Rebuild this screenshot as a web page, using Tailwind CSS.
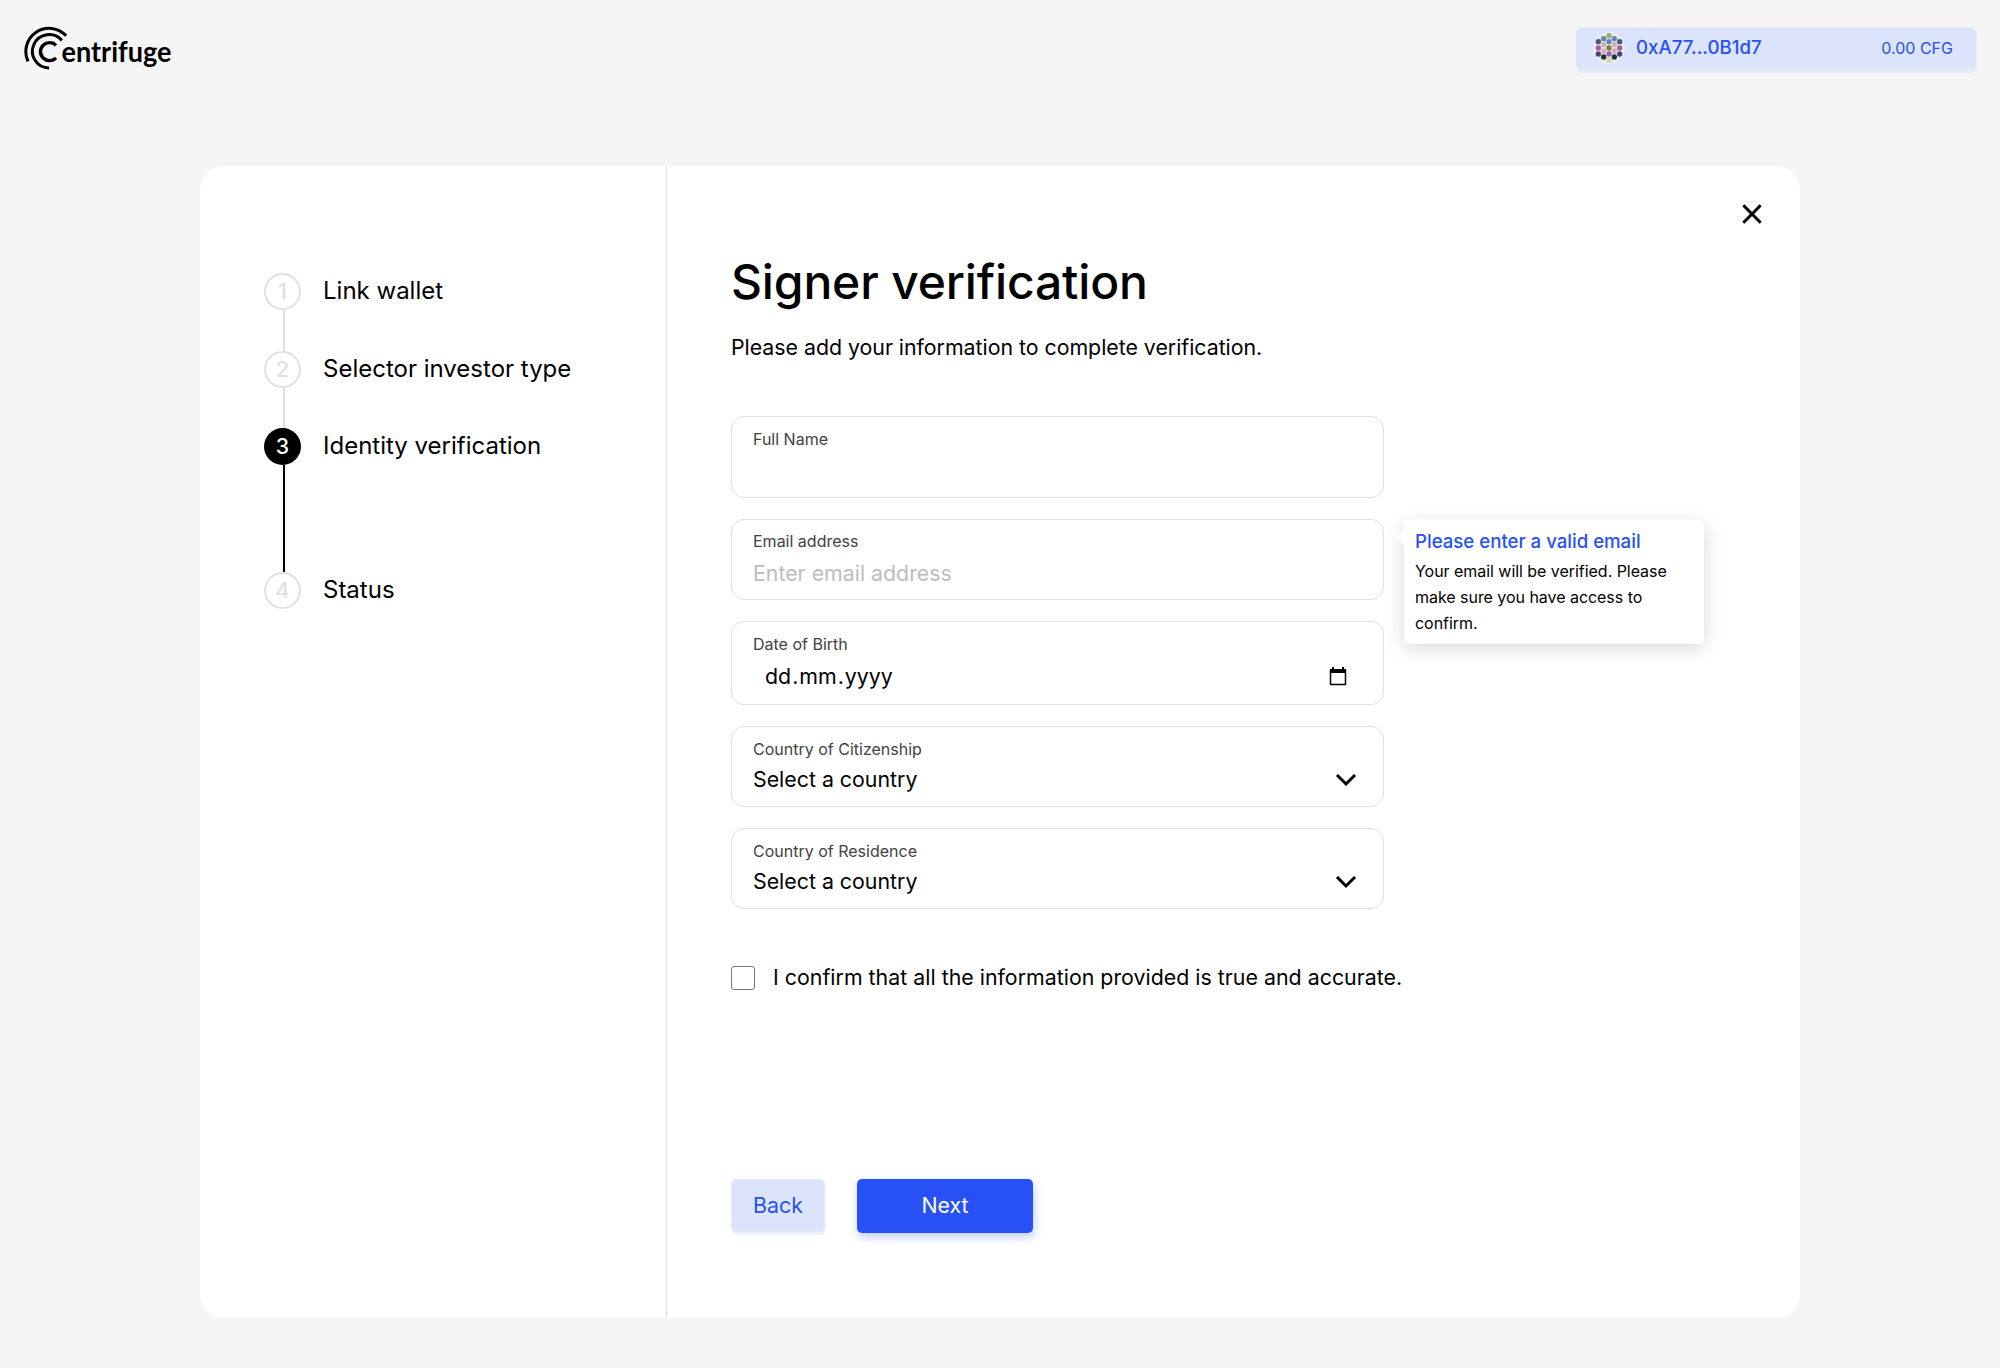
<!DOCTYPE html>
<html lang="en">
<head>
<meta charset="utf-8">
<title>Signer verification</title>
<script src="https://cdn.jsdelivr.net/npm/@tailwindcss/browser@4"></script>
</head>
<body class="h-[1368px] bg-[#f5f5f5] font-['Inter',sans-serif] text-black">
<header class="flex h-[166px] items-start justify-between pl-6 pr-6 pt-[26px]">
  <svg class="h-11 w-[150px]" viewBox="24 26 150 44" fill="none" stroke="#000" stroke-width="3" role="img" aria-label="Centrifuge">
    <path d="M66.100 35.800A23.200 23.200 0 0 0 28 61.300"/>
    <path d="M61.800 40.450A16.700 16.700 0 1 0 49.100 68"/>
    <path d="M56 45.400A9 9 0 1 0 56 57.800" stroke-width="3.400"/>
    <text x="61.5" y="61.5" textLength="110" lengthAdjust="spacingAndGlyphs" font-family="Lato" font-weight="700" font-size="28" fill="#000" stroke="none">entrifuge</text>
  </svg>
  <div class="mt-px flex h-[43px] w-[400px] items-center rounded-[5px] border border-[#e6e9f2] bg-[#dce4fc] pb-0.5 pl-4 pr-[22px] text-[#2750f5] shadow-[1px_3px_0_#e6eafa]">
    <svg class="size-8" viewBox="0 0 96 96">
      <circle cx="48" cy="48" r="48" fill="#ebebee"/>
      <g fill="#8fb169"><circle cx="48" cy="11" r="8"/></g>
      <g fill="#6587b3"><circle cx="32" cy="20" r="8"/><circle cx="64" cy="20" r="8"/><circle cx="48" cy="29" r="8"/></g>
      <g fill="#465685"><circle cx="16" cy="29" r="8"/><circle cx="80" cy="29" r="8"/></g>
      <g fill="#d0aebb"><circle cx="32" cy="38" r="8"/><circle cx="64" cy="38" r="8"/></g>
      <g fill="#a8609a"><circle cx="16" cy="48" r="8"/><circle cx="80" cy="48" r="8"/></g>
      <g fill="#767e3e"><circle cx="48" cy="48" r="8"/></g>
      <g fill="#d4b0b0"><circle cx="32" cy="57" r="8"/><circle cx="64" cy="57" r="8"/></g>
      <g fill="#4f3f80"><circle cx="16" cy="66" r="8"/><circle cx="80" cy="66" r="8"/></g>
      <g fill="#9560b5"><circle cx="48" cy="66" r="8"/></g>
      <g fill="#1f3338"><circle cx="32" cy="75" r="8"/><circle cx="64" cy="75" r="8"/></g>
      <g fill="#d5d6ac"><circle cx="48" cy="84" r="8"/></g>
    </svg>
    <span class="ml-[11px] text-[18.67px] font-medium leading-6">0xA77...0B1d7</span>
    <span class="ml-auto text-base">0.00 CFG</span>
  </div>
</header>

<main class="mx-[200px] flex h-[1152px] rounded-3xl bg-white">
  <aside class="w-[467px] border-r border-[#e0e0e0] pl-16 pt-[107px]">
    <ol class="text-2xl">
      <li class="flex h-[77.5px] gap-[22px]">
        <div class="flex w-[37px] flex-col items-center">
          <span class="flex size-[37px] shrink-0 items-center justify-center rounded-full border-2 border-[#e0e0e0] text-[21.33px] font-medium text-[#e0e0e0]">1</span>
          <span class="ml-[3px] w-0.5 grow bg-[#e0e0e0]"></span>
        </div>
        <span class="h-9 leading-[35px]">Link wallet</span>
      </li>
      <li class="flex h-[77.5px] gap-[22px]">
        <div class="flex w-[37px] flex-col items-center">
          <span class="flex size-[37px] shrink-0 items-center justify-center rounded-full border-2 border-[#e0e0e0] text-[21.33px] font-medium text-[#e0e0e0]">2</span>
          <span class="ml-[3px] w-0.5 grow bg-[#e0e0e0]"></span>
        </div>
        <span class="h-9 leading-[35px]">Selector investor type</span>
      </li>
      <li class="flex h-36 gap-[22px]">
        <div class="flex w-[37px] flex-col items-center">
          <span class="flex size-[37px] shrink-0 items-center justify-center rounded-full bg-black text-[21.33px] font-medium text-white">3</span>
          <span class="ml-[3px] w-0.5 grow bg-black"></span>
        </div>
        <span class="h-9 leading-[35px]">Identity verification</span>
      </li>
      <li class="flex gap-[22px]">
        <span class="flex size-[37px] shrink-0 items-center justify-center rounded-full border-2 border-[#e0e0e0] text-[21.33px] font-medium text-[#e0e0e0]">4</span>
        <span class="h-9 leading-[35px]">Status</span>
      </li>
    </ol>
  </aside>

  <section class="relative flex grow flex-col pl-16">
    <button class="absolute right-8 top-8 size-8" aria-label="Close">
      <svg viewBox="0 0 32 32" fill="none" stroke="#000" stroke-width="3"><path d="M7.300 7.300l17.400 17.400M24.700 7.300L7.300 24.700"/></svg>
    </button>
    <h1 class="mt-[86px] text-5xl font-medium leading-[60px] tracking-[-0.15px]">Signer verification</h1>
    <p class="mt-[19px] text-[21.33px] leading-8 tracking-[-0.02px]">Please add your information to complete verification.</p>

    <form class="mt-[53px] flex w-[653px] flex-col gap-[21px]">
      <div class="flex h-[82px] flex-col rounded-[13px] border border-[#e0e0e0] px-[21px] pt-3">
        <label class="text-base leading-[21px] text-[#424242]">Full Name</label>
      </div>
      <div class="relative flex h-[81px] flex-col rounded-[13px] border border-[#e0e0e0] px-[21px] pt-[11px]">
        <label class="text-base leading-[21px] text-[#424242]">Email address</label>
        <span class="mt-[5px] text-[21.33px] leading-8 text-[#bdbdbd]">Enter email address</span>
        <div class="absolute -top-px left-[672px] w-[300px] rounded-[5px] bg-white px-[11px] pb-2 pt-[11px] shadow-[0_5px_20px_rgba(0,0,0,0.15)]">
          <i class="absolute -left-[6px] top-3 size-3 rotate-45 bg-white"></i>
          <p class="text-[18.67px] font-medium leading-6 tracking-[-0.02px] text-[#2750f5]">Please enter a valid email</p>
          <p class="mt-1 text-base leading-[26px] tracking-[-0.04px]">Your email will be verified. Please make sure you have access to confirm.</p>
        </div>
      </div>
      <div class="flex h-[84px] flex-col rounded-[13px] border border-[#e0e0e0] px-[21px] pt-3">
        <label class="text-base leading-[21px] text-[#424242]">Date of Birth</label>
        <div class="mt-[5px] flex items-center justify-between pl-3 pr-[14px] text-[21.33px] leading-8">
          <span class="flex gap-px"><span>dd</span><span>.</span><span>mm</span><span>.</span><span>yyyy</span></span>
          <svg class="size-5" viewBox="0 0 20 20" fill="none"><path d="M2.500 4.500h15v14h-15z" stroke="#000" stroke-width="1.500" stroke-linejoin="round"/><path d="M2 3h16v4H2zM4 1h2v3H4zM14 1h2v3h-2z" fill="#000"/></svg>
        </div>
      </div>
      <div class="flex h-[81px] flex-col rounded-[13px] border border-[#e0e0e0] px-[21px] pt-3">
        <label class="text-base leading-[21px] text-[#424242]">Country of Citizenship</label>
        <div class="mt-[3px] flex items-center justify-between text-[21.33px] leading-8">
          <span>Select a country</span>
          <svg class="h-8 w-8" viewBox="0 0 32 32" fill="none" stroke="#000" stroke-width="3"><path d="M7 12l9 9 9-9"/></svg>
        </div>
      </div>
      <div class="flex h-[81px] flex-col rounded-[13px] border border-[#e0e0e0] px-[21px] pt-3">
        <label class="text-base leading-[21px] text-[#424242]">Country of Residence</label>
        <div class="mt-[3px] flex items-center justify-between text-[21.33px] leading-8">
          <span>Select a country</span>
          <svg class="h-8 w-8" viewBox="0 0 32 32" fill="none" stroke="#000" stroke-width="3"><path d="M7 12l9 9 9-9"/></svg>
        </div>
      </div>
    </form>

    <label class="mt-[53px] flex h-8 items-center gap-[18px] text-[21.33px] tracking-[0.02px]">
      <span class="size-6 rounded-[3px] border border-[#767676] bg-white"></span>
      I confirm that all the information provided is true and accurate.
    </label>

    <div class="mt-[185px] flex items-start gap-8 text-[21.33px]">
      <button class="h-[53px] w-[94px] rounded-[5px] border border-[#e6e9f2] bg-[#dce4fc] text-[#2750f5] shadow-[1px_3px_0_#eef2fd]">Back</button>
      <button class="h-[54px] w-[176px] rounded-[5px] bg-[#2750f5] text-white shadow-[1px_4px_10px_rgba(39,80,245,0.3)]">Next</button>
    </div>
  </section>
</main>
</body>
</html>
